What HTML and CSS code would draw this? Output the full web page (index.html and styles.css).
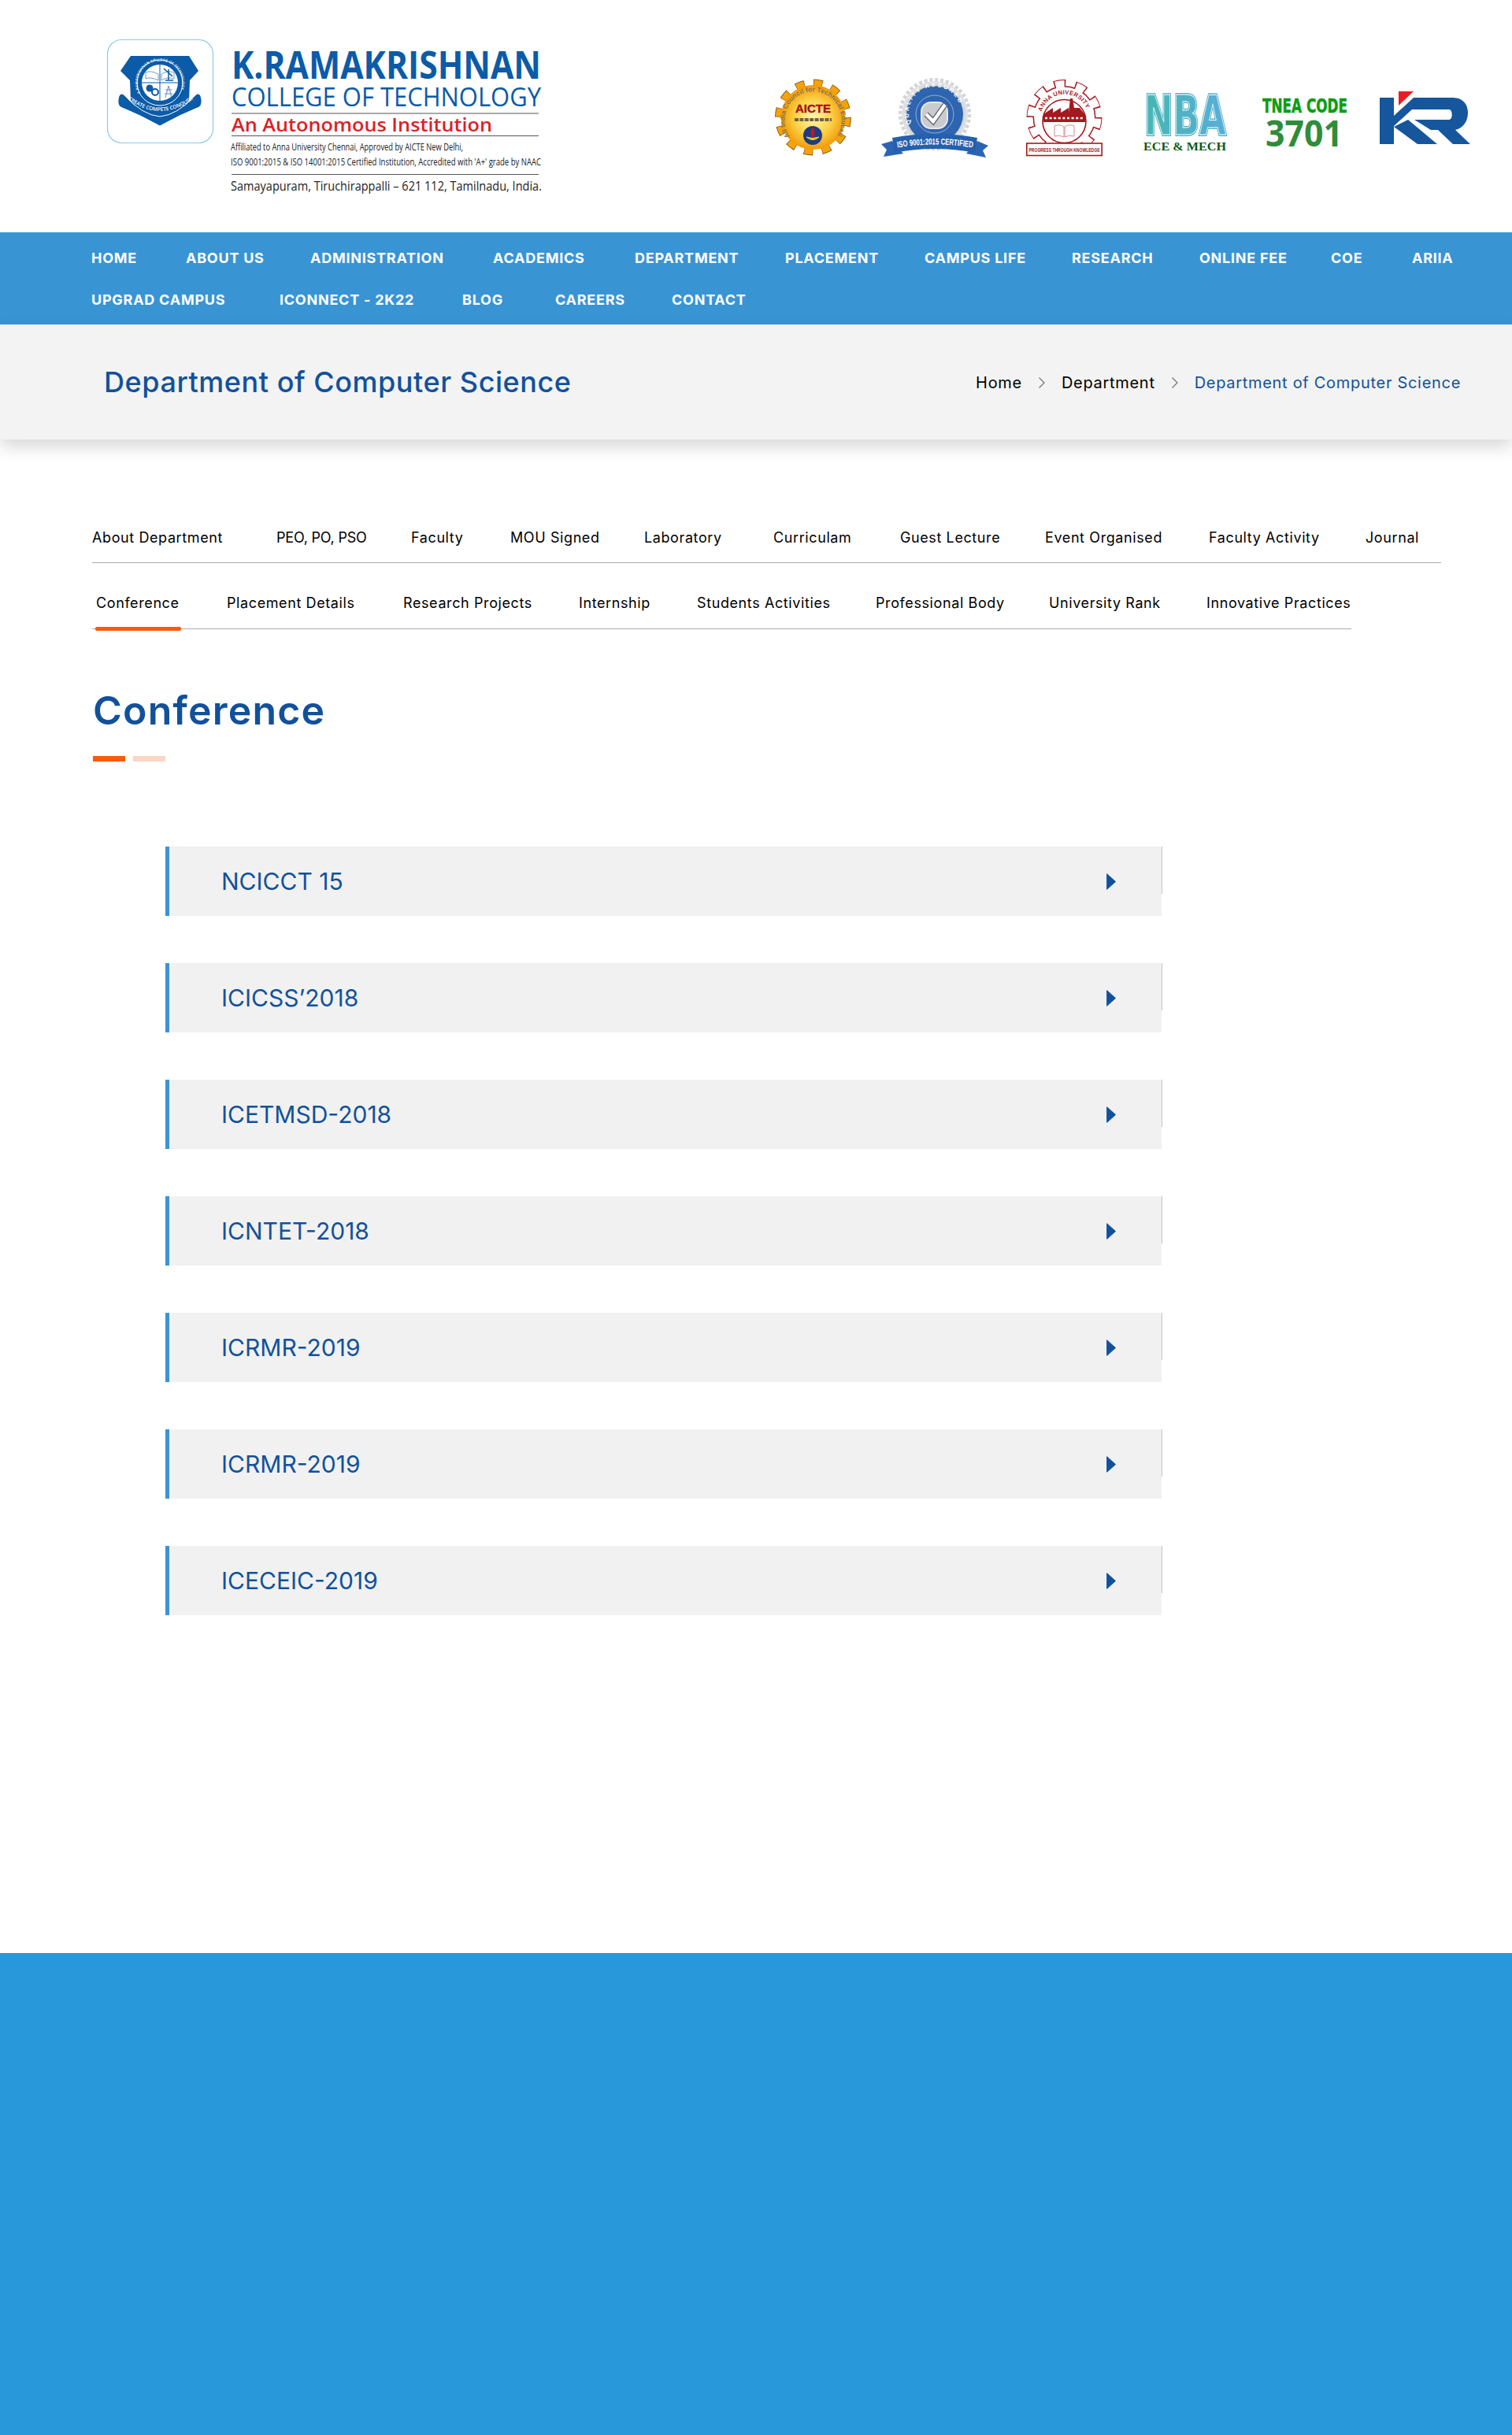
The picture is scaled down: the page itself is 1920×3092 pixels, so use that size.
FILE: index.html
```html
<!DOCTYPE html>
<html lang="en">
<head>
    <meta charset="UTF-8">
    <meta name="viewport" content="width=device-width, initial-scale=1.0">
    <title>Conference - K.Ramakrishnan College of Technology</title>
    <link rel="stylesheet" href="styles.css">
</head>
<body>

    <header class="site-header">
        <svg class="college-logo" width="570" height="210" viewBox="130 40 570 210">
            <defs>
                <path id="crestBanner" d="M160 124 Q203 158 248 124"/>
                <path id="crestRing" d="M178 118 A28 28 0 1 1 228 118"/>
            </defs>
            <rect x="136.5" y="50.5" width="134" height="131" rx="18" fill="#fff" stroke="#8ccbe4" stroke-width="1.2"/>
            <path d="M166 71 H240 L252 90 L241 102 L240 128 Q222 148 203 160 Q184 148 166 128 L165 102 L153 90 Z" fill="#0b5ba8"/>
            <path d="M151 122 Q148 132 153 136 Q178 146 203 160 Q228 146 253 136 Q258 132 255 122 Q252 116 247 122 Q225 146 203 148 Q181 146 159 122 Q154 116 151 122 Z" fill="#0b5ba8" stroke="#fff" stroke-width="1"/>
            <circle cx="203" cy="105" r="29" fill="#0b5ba8" stroke="#fff" stroke-width="1"/>
            <circle cx="203" cy="105" r="23" fill="#fff"/>
            <path d="M203 82 V128 M180 105 H226" stroke="#0b5ba8" stroke-width="1"/>
            <text font-family="'Open Sans', sans-serif" font-size="4.6" font-weight="600" fill="#fff" letter-spacing=".2">
                <textPath href="#crestRing">K.RAMAKRISHNAN COLLEGE OF TECHNOLOGY</textPath>
            </text>
            <path d="M185 92 Q191 89 201 94 V102 Q191 97 185 100 Z M221 92 Q213 89 205 94 V102 Q213 97 221 100 Z" fill="none" stroke="#6f9ccd" stroke-width="1"/>
            <path d="M208 87 L219 97 M214 88 L214 102 M210 102 H220" stroke="#0b5ba8" stroke-width="1.5" fill="none"/>
            <circle cx="190" cy="112" r="4.5" fill="#0b5ba8"/>
            <circle cx="197" cy="117" r="4" fill="none" stroke="#0b5ba8" stroke-width="2"/>
            <path d="M214 109 L210 124 M214 109 L218 124 M210 114 H218 M209 119 H219" stroke="#5f8fc4" stroke-width="1"/>
            <text font-family="'Open Sans', sans-serif" font-size="6.5" font-weight="600" fill="#fff" text-anchor="middle">
                <textPath href="#crestBanner" startOffset="50%">CREATE   COMPETE   CONQUER</textPath>
            </text>

            <g font-family="'Open Sans', sans-serif">
                <text x="294" y="100" font-size="49" font-weight="700" fill="#0b5ba8" textLength="393" lengthAdjust="spacingAndGlyphs">K.RAMAKRISHNAN</text>
                <text x="294" y="135" font-size="32" fill="#0b5ba8" textLength="393" lengthAdjust="spacingAndGlyphs">COLLEGE OF TECHNOLOGY</text>
                <rect x="294" y="143.5" width="390" height="1" fill="#555"/>
                <text x="294" y="167" font-size="23" font-weight="600" fill="#dd1f27" textLength="331" lengthAdjust="spacingAndGlyphs">An Autonomous Institution</text>
                <rect x="294" y="172" width="390" height="1" fill="#555"/>
                <text x="293" y="191" font-size="12.5" fill="#222" textLength="295" lengthAdjust="spacingAndGlyphs">Affiliated to Anna University Chennai, Approved by AICTE New Delhi,</text>
                <text x="293" y="210" font-size="12.5" fill="#222" textLength="394" lengthAdjust="spacingAndGlyphs">ISO 9001:2015 &amp; ISO 14001:2015 Certified Institution, Accredited with 'A+' grade by NAAC</text>
                <rect x="294" y="221" width="390" height="1" fill="#555"/>
                <text x="293" y="242" font-size="15.5" fill="#222" textLength="395" lengthAdjust="spacingAndGlyphs">Samayapuram, Tiruchirappalli – 621 112, Tamilnadu, India.</text>
            </g>
        </svg>

        <div class="badges">
            <svg class="badge badge-aicte" width="97" height="110" viewBox="0 0 97 110">
                <defs>
                    <radialGradient id="aicteFill">
                        <stop offset="0" stop-color="#fff6b0"/>
                        <stop offset=".55" stop-color="#fdd34a"/>
                        <stop offset="1" stop-color="#f39a06"/>
                    </radialGradient>
                    <path id="aicteArc" d="M19 78 A36 36 0 1 1 78 78"/>
                </defs>
                <circle cx="48.5" cy="54" r="43.5" fill="none" stroke="#8a5a10" stroke-width="10" stroke-dasharray="11.4 11.4"/>
                <circle cx="48.5" cy="54" r="43.5" fill="none" stroke="#f5a30c" stroke-width="8" stroke-dasharray="10 12.8" stroke-dashoffset="-.7"/>
                <circle cx="48.5" cy="54" r="41" fill="url(#aicteFill)"/>
                <text font-family="'Liberation Sans', sans-serif" font-size="8.5" font-weight="700" fill="#84744e">
                    <textPath href="#aicteArc">All India Council for Technical Education</textPath>
                </text>
                <text x="48.5" y="48" font-family="'Liberation Sans', sans-serif" font-size="15" font-weight="700" fill="#a60f14" stroke="#a60f14" stroke-width=".4" text-anchor="middle">AICTE</text>
                <path d="M25 57 H72" stroke="#6e6247" stroke-width="4" stroke-dasharray="5 1.4"/>
                <circle cx="48" cy="77" r="12" fill="#1d3c86"/>
                <path d="M48 66 Q53 74 48 80 Q43 74 48 66 Z" fill="#c3161c"/>
                <path d="M40 79 Q48 86 56 79 Q48 82 40 79 Z" fill="#f2d21f" stroke="#f2d21f"/>
            </svg>

            <svg class="badge badge-iso" width="136" height="110" viewBox="0 0 136 110">
                <defs>
                    <path id="isoArc" d="M38 62 A33 33 0 1 1 98 62"/>
                    <path id="isoBand" d="M18 93 Q68 84 119 93"/>
                    <radialGradient id="isoSilver">
                        <stop offset=".7" stop-color="#bfc1c4"/>
                        <stop offset="1" stop-color="#e4e5e7"/>
                    </radialGradient>
                </defs>
                <circle cx="68" cy="50" r="43" fill="none" stroke="#d3d4d6" stroke-width="6" stroke-dasharray="4 2.75"/>
                <circle cx="68" cy="50" r="42" fill="url(#isoSilver)"/>
                <circle cx="68" cy="50" r="36" fill="#2e64b0"/>
                <circle cx="68" cy="50" r="24" fill="none" stroke="#8fb0dd" stroke-width="1"/>
                <text font-family="'Liberation Sans', sans-serif" font-size="7.5" font-weight="700" fill="#fff" letter-spacing="2.4">
                    <textPath href="#isoArc">QUALITY ASSURED</textPath>
                </text>
                <rect x="51" y="35" width="33" height="33" rx="12" fill="#c9cbcf" stroke="#e8e9ea" stroke-width="2"/>
                <path d="M57 50 L66 59 L81 38" fill="none" stroke="#5d6066" stroke-width="7"/>
                <path d="M57 50 L66 59 L81 38" fill="none" stroke="#fff" stroke-width="4.5"/>
                <path d="M14 84 L0 88 L7 95 L3 104 L28 100 Z M122 84 L136 90 L129 96 L133 105 L108 100 Z" fill="#2c64b4"/>
                <path d="M14 80 Q68 70 122 80 L119 99 Q68 89 17 99 Z" fill="#2460ad"/>
                <text font-family="'Liberation Sans', sans-serif" font-size="11" font-weight="700" fill="#fff" text-anchor="middle">
                    <textPath href="#isoBand" startOffset="50%" textLength="96" lengthAdjust="spacingAndGlyphs">ISO 9001:2015 CERTIFIED</textPath>
                </text>
            </svg>

            <svg class="badge badge-anna" width="97" height="110" viewBox="0 0 97 110">
                <defs>
                    <path id="annaArc" d="M20 47 A30 30 0 0 1 78 47"/>
                </defs>
                <circle cx="48.5" cy="54" r="42" fill="none" stroke="#a5181e" stroke-width="12" stroke-dasharray="14.5 11.9"/>
                <circle cx="48.5" cy="54" r="40" fill="#a5181e"/>
                <circle cx="48.5" cy="54" r="42" fill="none" stroke="#fff" stroke-width="10" stroke-dasharray="11.5 14.9" stroke-dashoffset="-1.5"/>
                <circle cx="48.5" cy="54" r="38.5" fill="#fff"/>
                <text font-family="'Liberation Sans', sans-serif" font-size="7.6" font-weight="700" fill="#a5181e" letter-spacing=".3">
                    <textPath href="#annaArc">ANNA UNIVERSITY</textPath>
                </text>
                <circle cx="48.5" cy="59" r="27.5" fill="none" stroke="#a5181e" stroke-width="1.6"/>
                <path d="M22 50 L34 42 V48 L44 42 V48 L54 42 V48 L56 30 H59 L61 42 L68 42 L75 51 V60 H22 Z" fill="#a5181e"/>
                <path d="M24 55 H74" stroke="#fff" stroke-width="2.5" stroke-dasharray="3 2.6"/>
                <path d="M36 65 Q43 62 48 66 V79 Q43 76 36 78 Z M61 65 Q54 62 49 66 V79 Q54 76 61 78 Z" fill="#fff" stroke="#d98a8e" stroke-width="1"/>
                <rect x=".8" y="87" width="95.4" height="15.5" fill="#fff" stroke="#a5181e" stroke-width="1.6"/>
                <text x="48.5" y="98" font-family="'Liberation Sans', sans-serif" font-size="8" font-weight="700" fill="#a5181e" text-anchor="middle" textLength="90" lengthAdjust="spacingAndGlyphs">PROGRESS THROUGH KNOWLEDGE</text>
            </svg>

            <svg class="badge badge-nba" width="106" height="110" viewBox="0 0 106 110">
                <defs>
                    <linearGradient id="nbaFill" gradientUnits="userSpaceOnUse" x1="0" y1="0" x2="106" y2="0">
                        <stop offset="0" stop-color="#45b6b0"/>
                        <stop offset="1" stop-color="#5aaedb"/>
                    </linearGradient>
                    <text id="nbaWord" x="1" y="76" font-family="'DejaVu Sans', sans-serif" font-size="70" font-weight="700" textLength="104" lengthAdjust="spacingAndGlyphs">NBA</text>
                </defs>
                <use href="#nbaWord" fill="#4fb2c6" stroke="#4fb2c6" stroke-width="4"/>
                <use href="#nbaWord" fill="url(#nbaFill)" stroke="#fff" stroke-width="1"/>
                <text x="0" y="96" font-family="'Liberation Serif', serif" font-size="15" font-weight="700" fill="#0e5a14" textLength="105" lengthAdjust="spacingAndGlyphs">ECE &amp; MECH</text>
            </svg>

            <svg class="badge badge-tnea" width="108" height="110" viewBox="0 0 108 110">
                <text x="0" y="48" font-family="'DejaVu Sans', sans-serif" font-size="24" font-weight="700" fill="#0a9e12" stroke="#0a9e12" stroke-width=".6" textLength="108" lengthAdjust="spacingAndGlyphs">TNEA CODE</text>
                <text x="4" y="91" font-family="'Open Sans', sans-serif" font-size="46" font-weight="700" fill="#2f8c3a" textLength="98" lengthAdjust="spacingAndGlyphs">3701</text>
            </svg>

            <svg class="badge badge-kr" width="115" height="110" viewBox="0 0 115 110">
                <path d="M0 29 H18 V52 L43 29 H93 C106 29 112 38 112 48 C112 60 105 68 96 70 L115 88 H93 L74 70 H65 L44 57 H88 C93 57 93 44 88 44 H41 L18 65 V88 H0 Z" fill="#16569d"/>
                <path d="M18 66 L36 57 L73 88 H48 Z" fill="#16569d"/>
                <path d="M24 21 H43 L24 39 Z" fill="#ec1c24"/>
            </svg>
        </div>
    </header>

    <nav class="main-nav">
        <ul class="nav-row nav-first">
            <li>HOME</li>
            <li>ABOUT US</li>
            <li>ADMINISTRATION</li>
            <li>ACADEMICS</li>
            <li>DEPARTMENT</li>
            <li>PLACEMENT</li>
            <li>CAMPUS LIFE</li>
            <li>RESEARCH</li>
            <li>ONLINE FEE</li>
            <li>COE</li>
            <li>ARIIA</li>
        </ul>
        <ul class="nav-row nav-second">
            <li>UPGRAD CAMPUS</li>
            <li>ICONNECT - 2K22</li>
            <li>BLOG</li>
            <li>CAREERS</li>
            <li>CONTACT</li>
        </ul>
    </nav>

    <section class="page-title">
        <h2>Department of Computer Science</h2>
        <ol class="crumbs">
            <li>Home</li>
            <li class="sep"><svg width="10" height="16" viewBox="0 0 10 16"><path d="M1.5 1.5 L8 8 L1.5 14.5" fill="none" stroke="#777" stroke-width="1.3"/></svg></li>
            <li>Department</li>
            <li class="sep"><svg width="10" height="16" viewBox="0 0 10 16"><path d="M1.5 1.5 L8 8 L1.5 14.5" fill="none" stroke="#777" stroke-width="1.3"/></svg></li>
            <li class="current">Department of Computer Science</li>
        </ol>
    </section>

    <main class="content">
        <ul class="tabs tabs-first">
            <li>About Department</li>
            <li class="tight">PEO, PO, PSO</li>
            <li>Faculty</li>
            <li>MOU Signed</li>
            <li>Laboratory</li>
            <li>Curriculam</li>
            <li>Guest Lecture</li>
            <li>Event Organised</li>
            <li>Faculty Activity</li>
            <li>Journal</li>
        </ul>
        <ul class="tabs tabs-second">
            <li class="active">Conference</li>
            <li>Placement Details</li>
            <li>Research Projects</li>
            <li>Internship</li>
            <li>Students Activities</li>
            <li>Professional Body</li>
            <li>University Rank</li>
            <li>Innovative Practices</li>
        </ul>

        <h1 class="section-title">Conference</h1>
        <div class="title-bars"><span></span><span class="light"></span></div>

        <div class="accordion">
            <div class="acc-item"><span>NCICCT 15</span><svg class="acc-arrow" width="12" height="21" viewBox="0 0 12 21"><path d="M0.7 0.7 L11.5 10.5 L0.7 20.3 Z" fill="#11519c" stroke="#11519c" stroke-linejoin="round"/></svg></div>
            <div class="acc-item"><span>ICICSS’2018</span><svg class="acc-arrow" width="12" height="21" viewBox="0 0 12 21"><path d="M0.7 0.7 L11.5 10.5 L0.7 20.3 Z" fill="#11519c" stroke="#11519c" stroke-linejoin="round"/></svg></div>
            <div class="acc-item"><span>ICETMSD-2018</span><svg class="acc-arrow" width="12" height="21" viewBox="0 0 12 21"><path d="M0.7 0.7 L11.5 10.5 L0.7 20.3 Z" fill="#11519c" stroke="#11519c" stroke-linejoin="round"/></svg></div>
            <div class="acc-item"><span>ICNTET-2018</span><svg class="acc-arrow" width="12" height="21" viewBox="0 0 12 21"><path d="M0.7 0.7 L11.5 10.5 L0.7 20.3 Z" fill="#11519c" stroke="#11519c" stroke-linejoin="round"/></svg></div>
            <div class="acc-item"><span>ICRMR-2019</span><svg class="acc-arrow" width="12" height="21" viewBox="0 0 12 21"><path d="M0.7 0.7 L11.5 10.5 L0.7 20.3 Z" fill="#11519c" stroke="#11519c" stroke-linejoin="round"/></svg></div>
            <div class="acc-item"><span>ICRMR-2019</span><svg class="acc-arrow" width="12" height="21" viewBox="0 0 12 21"><path d="M0.7 0.7 L11.5 10.5 L0.7 20.3 Z" fill="#11519c" stroke="#11519c" stroke-linejoin="round"/></svg></div>
            <div class="acc-item"><span>ICECEIC-2019</span><svg class="acc-arrow" width="12" height="21" viewBox="0 0 12 21"><path d="M0.7 0.7 L11.5 10.5 L0.7 20.3 Z" fill="#11519c" stroke="#11519c" stroke-linejoin="round"/></svg></div>
        </div>
    </main>

    <footer class="site-footer"></footer>

</body>
</html>
```

FILE: styles.css
```css
* {
    box-sizing: border-box;
}

body {
    margin: 0;
    font-family: Inter, "Open Sans", sans-serif;
    color: #000;
    background: #fff;
}

ul, ol {
    list-style: none;
    margin: 0;
    padding: 0;
}

/* top logos */
.site-header {
    display: flex;
    height: 295px;
    padding: 40px 53px 0 130px;
}

.badges {
    display: flex;
    margin: 55px 0 0 auto;
}

.badge {
    display: block;
}

.badge-iso { margin-left: 38px; }
.badge-anna { margin-left: 48px; }
.badge-nba { margin-left: 52px; }
.badge-tnea { margin-left: 45px; }
.badge-kr { margin-left: 41px; }

/* menu */
.main-nav {
    height: 117px;
    padding: 6px 0 0 116px;
    background: #3994d4;
}

.nav-row {
    display: grid;
    height: 53px;
    align-items: center;
    color: #fff;
    font-size: 18px;
    font-weight: 700;
    letter-spacing: .75px;
    white-space: nowrap;
}

.nav-first {
    grid-template-columns: 120px 158px 232px 180px 191px 177px 187px 162px 167px 103px auto;
}

.nav-second {
    grid-template-columns: 239px 232px 118px 148px auto;
}

/* title band */
.page-title {
    position: relative;
    display: flex;
    justify-content: space-between;
    align-items: center;
    height: 146px;
    padding: 0 65px 0 132px;
    background: #f3f3f3;
    box-shadow: 0 10px 20px rgba(0, 0, 0, .15);
}

.page-title h2 {
    margin: 0;
    font-size: 36px;
    font-weight: 500;
    letter-spacing: .55px;
    color: #11519c;
}

.crumbs {
    display: flex;
    align-items: center;
    padding-top: 1px;
    font-size: 20px;
    letter-spacing: .7px;
}

.crumbs .sep {
    display: flex;
    margin: 0 20px;
}

.crumbs .current {
    color: #11519c;
}

/* tabs */
.content {
    height: 1922px;
    padding: 92px 0 0 117px;
}

.tabs {
    display: grid;
    align-items: center;
    border-bottom: 1.5px solid #aaa;
    font-size: 18px;
    letter-spacing: .6px;
    white-space: nowrap;
}

.tabs-first {
    width: 1713px;
    height: 65px;
    grid-template-columns: 234px 171px 126px 170px 164px 161px 184px 208px 199px auto;
}

.tabs-second {
    width: 1599px;
    height: 84px;
    padding: 18px 0 0 5px;
    grid-template-columns: 166px 224px 223px 150px 227px 220px 200px auto;
}

.tabs .tight {
    letter-spacing: -.2px;
}

.tabs .active {
    position: relative;
    justify-self: start;
}

.tabs .active::after {
    content: "";
    position: absolute;
    left: -1px;
    right: -2px;
    top: 41px;
    height: 5px;
    border-radius: 2px;
    background: #f95a0b;
}

.section-title {
    margin: 73px 0 0;
    padding-left: 1px;
    font-size: 50px;
    line-height: 60px;
    font-weight: 600;
    letter-spacing: 1.2px;
    color: #11519c;
}

.title-bars {
    display: flex;
    gap: 10px;
    margin: 28px 0 0 1px;
}

.title-bars span {
    width: 41px;
    height: 7px;
    background: #f95a0b;
}

.title-bars .light {
    background: #fdd5c4;
}

/* conference list */
.accordion {
    margin: 108px 0 0 93px;
    width: 1265px;
}

.acc-item {
    position: relative;
    display: flex;
    justify-content: space-between;
    align-items: center;
    height: 88px;
    margin-bottom: 60px;
    padding: 0 58px 0 66px;
    border-left: 5px solid #3a94d4;
    background: #f1f1f1;
    color: #11519c;
    font-size: 30px;
    font-weight: 400;
}

.acc-item::after {
    content: "";
    position: absolute;
    right: -1px;
    top: 0;
    width: 1.5px;
    height: 60px;
    background: #c4c4c4;
}

.acc-arrow {
    display: block;
}

.site-footer {
    height: 612px;
    background: #2998da;
}
```
